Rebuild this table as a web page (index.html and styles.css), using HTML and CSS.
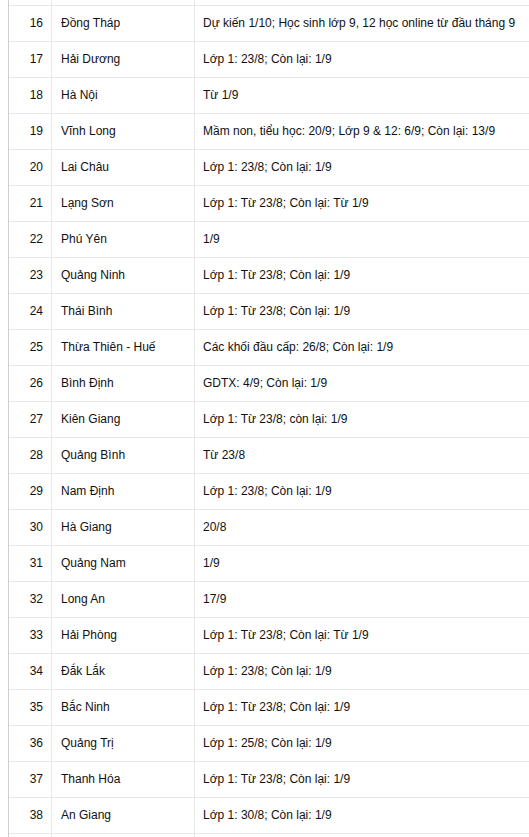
FILE: index.html
```html
<!DOCTYPE html>
<html lang="vi">
<head>
<meta charset="utf-8">
<link rel="stylesheet" href="styles.css">
</head>
<body>
<div class="table">
  <div class="row spacer"><div class="c num"></div><div class="c name"></div><div class="c info"></div></div>
  <div class="row"><div class="c num">16</div><div class="c name">Đồng Tháp</div><div class="c info">Dự kiến 1/10; Học sinh lớp 9, 12 học online từ đầu tháng 9</div></div>
  <div class="row"><div class="c num">17</div><div class="c name">Hải Dương</div><div class="c info">Lớp 1: 23/8; Còn lại: 1/9</div></div>
  <div class="row"><div class="c num">18</div><div class="c name">Hà Nội</div><div class="c info">Từ 1/9</div></div>
  <div class="row"><div class="c num">19</div><div class="c name">Vĩnh Long</div><div class="c info">Mầm non, tiểu học: 20/9; Lớp 9 &amp; 12: 6/9; Còn lại: 13/9</div></div>
  <div class="row"><div class="c num">20</div><div class="c name">Lai Châu</div><div class="c info">Lớp 1: 23/8; Còn lại: 1/9</div></div>
  <div class="row"><div class="c num">21</div><div class="c name">Lạng Sơn</div><div class="c info">Lớp 1: Từ 23/8; Còn lại: Từ 1/9</div></div>
  <div class="row"><div class="c num">22</div><div class="c name">Phú Yên</div><div class="c info">1/9</div></div>
  <div class="row"><div class="c num">23</div><div class="c name">Quảng Ninh</div><div class="c info">Lớp 1: Từ 23/8; Còn lại: 1/9</div></div>
  <div class="row"><div class="c num">24</div><div class="c name">Thái Bình</div><div class="c info">Lớp 1: Từ 23/8; Còn lại: 1/9</div></div>
  <div class="row"><div class="c num">25</div><div class="c name">Thừa Thiên - Huế</div><div class="c info">Các khối đầu cấp: 26/8; Còn lại: 1/9</div></div>
  <div class="row"><div class="c num">26</div><div class="c name">Bình Định</div><div class="c info">GDTX: 4/9; Còn lại: 1/9</div></div>
  <div class="row"><div class="c num">27</div><div class="c name">Kiên Giang</div><div class="c info">Lớp 1: Từ 23/8; còn lại: 1/9</div></div>
  <div class="row"><div class="c num">28</div><div class="c name">Quảng Bình</div><div class="c info">Từ 23/8</div></div>
  <div class="row"><div class="c num">29</div><div class="c name">Nam Định</div><div class="c info">Lớp 1: 23/8; Còn lại: 1/9</div></div>
  <div class="row"><div class="c num">30</div><div class="c name">Hà Giang</div><div class="c info">20/8</div></div>
  <div class="row"><div class="c num">31</div><div class="c name">Quảng Nam</div><div class="c info">1/9</div></div>
  <div class="row"><div class="c num">32</div><div class="c name">Long An</div><div class="c info">17/9</div></div>
  <div class="row"><div class="c num">33</div><div class="c name">Hải Phòng</div><div class="c info">Lớp 1: Từ 23/8; Còn lại: Từ 1/9</div></div>
  <div class="row"><div class="c num">34</div><div class="c name">Đắk Lắk</div><div class="c info">Lớp 1: 23/8; Còn lại: 1/9</div></div>
  <div class="row"><div class="c num">35</div><div class="c name">Bắc Ninh</div><div class="c info">Lớp 1: Từ 23/8; Còn lại: 1/9</div></div>
  <div class="row"><div class="c num">36</div><div class="c name">Quảng Trị</div><div class="c info">Lớp 1: 25/8; Còn lại: 1/9</div></div>
  <div class="row"><div class="c num">37</div><div class="c name">Thanh Hóa</div><div class="c info">Lớp 1: Từ 23/8; Còn lại: 1/9</div></div>
  <div class="row"><div class="c num">38</div><div class="c name">An Giang</div><div class="c info">Lớp 1: 30/8; Còn lại: 1/9</div></div>
  <div class="row"><div class="c num"></div><div class="c name"></div><div class="c info"></div></div>
</div>
</body>
</html>
```
FILE: styles.css
```css
html, body {
  margin: 0;
  padding: 0;
  background: #fff;
  overflow: hidden;
}
.table {
  margin-left: 8px;
  border-left: 1px solid #cfcfcf;
  font-family: "Liberation Sans", Arial, sans-serif;
  font-size: 12px;
  color: #111;
}
.row {
  display: grid;
  grid-template-columns: 43px 143px 1fr;
  height: 36px;
  box-sizing: border-box;
  border-bottom: 1px solid #e8e8e8;
}
.row.spacer {
  height: 6px;
}
.c {
  display: flex;
  align-items: center;
  box-sizing: border-box;
  white-space: nowrap;
  padding-bottom: 1px;
}
.num {
  justify-content: flex-end;
  padding-right: 8px;
  border-right: 1px solid #e8e8e8;
}
.name {
  padding-left: 9px;
  border-right: 1px solid #e8e8e8;
}
.info {
  padding-left: 8px;
}
```
